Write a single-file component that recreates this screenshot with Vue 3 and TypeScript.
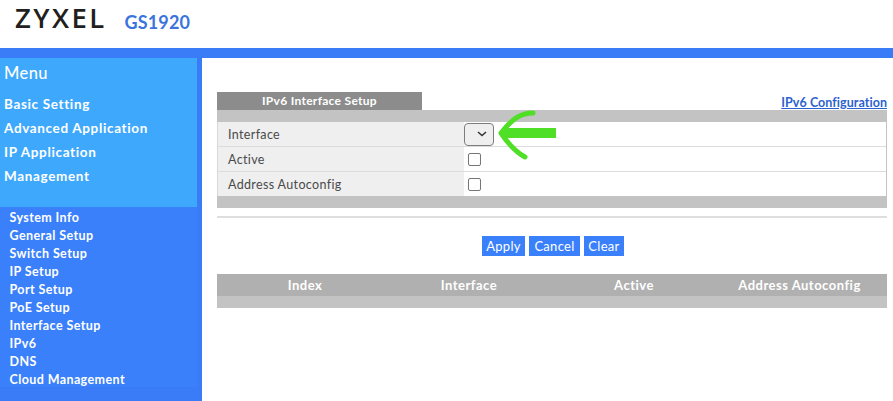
<script setup lang="ts">
const mainMenu: string[] = ['Basic Setting', 'Advanced Application', 'IP Application', 'Management']
const subMenu: string[] = ['System Info', 'General Setup', 'Switch Setup', 'IP Setup', 'Port Setup', 'PoE Setup', 'Interface Setup', 'IPv6', 'DNS', 'Cloud Management']
const columns: string[] = ['Index', 'Interface', 'Active', 'Address Autoconfig']
const buttons: string[] = ['Apply', 'Cancel', 'Clear']
</script>

<template>
  <div class="page">
    <header class="header">
      <span class="logo">ZYXEL</span>
      <span class="model">GS1920</span>
    </header>
    <div class="bar"></div>
    <div class="body">
      <aside class="side">
        <nav class="main-menu">
          <div class="menu-title">Menu</div>
          <div v-for="m in mainMenu" :key="m" class="main-item">{{ m }}</div>
        </nav>
        <nav class="sub-menu">
          <div v-for="s in subMenu" :key="s" class="sub-item">{{ s }}</div>
        </nav>
      </aside>
      <main class="content">
        <div class="tabs">
          <div class="tab">IPv6 Interface Setup</div>
          <a class="link">IPv6 Configuration</a>
        </div>
        <div class="band"></div>
        <div class="form">
          <div class="row">
            <div class="label">Interface</div>
            <div class="field">
              <div class="select">
                <svg width="10" height="6" viewBox="0 0 10 6"><path d="M1 1l4 3.6L9 1" fill="none" stroke="#333" stroke-width="1.5"/></svg>
              </div>
            </div>
          </div>
          <div class="row">
            <div class="label">Active</div>
            <div class="field"><span class="check"></span></div>
          </div>
          <div class="row last">
            <div class="label">Address Autoconfig</div>
            <div class="field"><span class="check"></span></div>
          </div>
          <svg class="arrow" width="66" height="54" viewBox="0 0 66 54">
            <path d="M63 25H10" fill="none" stroke="#4fdf26" stroke-width="10"/>
            <path d="M40 5C28 5 20 10 8 25C14 34 21 43 32 49" fill="none" stroke="#4fdf26" stroke-width="5" stroke-linecap="round" stroke-linejoin="round"/>
          </svg>
        </div>
        <div class="band"></div>
        <div class="divider"></div>
        <div class="buttons">
          <button v-for="b in buttons" :key="b" class="btn" type="button">{{ b }}</button>
        </div>
        <div class="table-head">
          <div v-for="c in columns" :key="c" class="col">{{ c }}</div>
        </div>
        <div class="band"></div>
      </main>
    </div>
  </div>
</template>

<style>
html, body { margin: 0; background: #fff; }
</style>

<style scoped>
.page { width: 893px; height: 401px; overflow: hidden; font-family: "Lato", "Liberation Sans", sans-serif; background: #fff; }
.header { height: 48px; display: flex; align-items: flex-start; box-sizing: border-box; padding: 3px 0 0 15px; }
.logo { font-family: "Open Sans", sans-serif; font-size: 27.5px; font-weight: 600; line-height: 30px; letter-spacing: 2.4px; color: #231f20; }
.model { font-family: "Lato", sans-serif; font-size: 18px; font-weight: 700; line-height: 30px; margin: 4px 0 0 18px; letter-spacing: 0.15px; color: #3b74dc; }
.bar { height: 10px; background: #3a7cf8; }
.body { display: flex; height: 343px; }
.side { width: 202px; background: #3a7cf8; box-sizing: border-box; padding-right: 5px; }
.main-menu { height: 149px; background: #3ea8fd; box-sizing: border-box; padding: 4px 0 0 4px; color: #fff; }
.menu-title { font-size: 16.5px; font-weight: 500; line-height: 22px; margin-bottom: 8px; letter-spacing: 0.4px; }
.main-item { font-size: 13.5px; font-weight: 700; line-height: 24px; letter-spacing: 0.65px; }
.sub-menu { height: 180px; background: #3a80fb; box-sizing: border-box; padding: 2px 0 0 9.5px; color: #fff; }
.sub-item { font-size: 12.5px; font-weight: 700; line-height: 18px; letter-spacing: 0.4px; }
.content { flex: 1; box-sizing: border-box; padding: 34px 6px 0 15px; color: #444; }
.tabs { display: flex; justify-content: space-between; align-items: flex-end; height: 18px; }
.tab { width: 205px; height: 18px; background: #8c8c8c; color: #fff; font-size: 12px; font-weight: 700; line-height: 18px; text-align: center; letter-spacing: 0.3px; }
.link { font-size: 12.5px; font-weight: 700; line-height: 15px; color: #2c62d0; text-decoration: underline; letter-spacing: 0.05px; }
.band { height: 12px; background: #c3c3c3; }
.form { position: relative; border-right: 1px solid #c3c3c3; border-left: 1px solid #d8d8d8; }
.row { display: flex; height: 25px; box-sizing: border-box; border-bottom: 1px solid #dcdcdc; }
.row.last { height: 24px; border-bottom: 0; }
.label { width: 246px; background: #efefef; font-size: 12.5px; line-height: 25px; padding-left: 10px; box-sizing: border-box; letter-spacing: 0.35px; color: #4a4a4a; }
.field { flex: 1; display: flex; align-items: center; }
.select { width: 30px; height: 23px; box-sizing: border-box; border: 1px solid #7d7d7d; border-radius: 4px; background: #efefef; display: flex; align-items: center; justify-content: center; padding-left: 6px; }
.check { width: 13px; height: 13px; margin-left: 4px; box-sizing: border-box; border: 1px solid #767676; border-radius: 2px; background: #fff; }
.arrow { position: absolute; left: 275px; top: -14px; }
.divider { height: 2px; margin-top: 8px; background: #dedede; }
.buttons { display: flex; justify-content: center; gap: 4px; margin-top: 18px; padding-left: 2px; }
.btn { height: 20px; padding: 0; border: 0; background: #3a80fb; color: #fff; font-family: inherit; font-size: 13px; line-height: 20px; letter-spacing: 0.3px; width: 43px; }
.btn:nth-child(2) { width: 51px; }
.btn:nth-child(3) { width: 40px; }
.table-head { display: grid; grid-template-columns: 176px 152px 178px 153px; height: 22px; margin-top: 18px; background: #b0b0b0; color: #fff; font-size: 13px; font-weight: 700; line-height: 22px; text-align: center; letter-spacing: 0.5px; }
.col { white-space: nowrap; }
</style>
